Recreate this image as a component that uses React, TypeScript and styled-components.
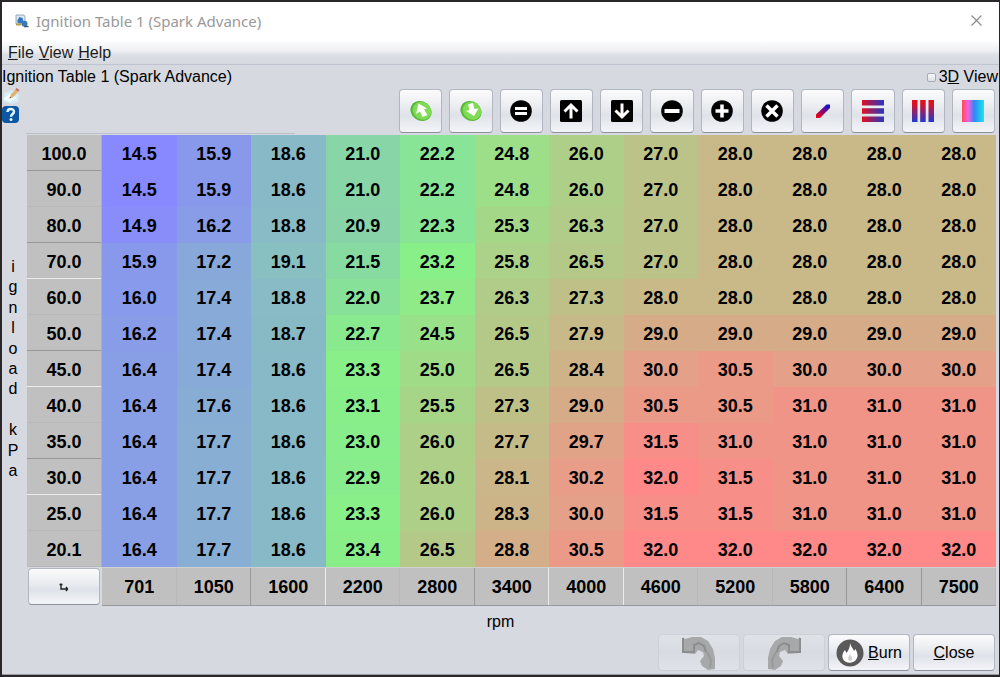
import React from "react";
import styled, { createGlobalStyle } from "styled-components";

const GlobalStyle = createGlobalStyle`
  * { box-sizing: border-box; }
  html, body, #root { height: 100%; }
  body { margin: 0; background: #2a272b; font-family: "Liberation Sans", Arial, sans-serif; color: #000; }
  button, input { font: inherit; color: inherit; }
`;

const LOADS = ["100.0", "90.0", "80.0", "70.0", "60.0", "50.0", "45.0", "40.0", "35.0", "30.0", "25.0", "20.1"];
const RPMS = [701, 1050, 1600, 2200, 2800, 3400, 4000, 4600, 5200, 5800, 6400, 7500];
const SPARK = [
  [14.5, 15.9, 18.6, 21.0, 22.2, 24.8, 26.0, 27.0, 28.0, 28.0, 28.0, 28.0],
  [14.5, 15.9, 18.6, 21.0, 22.2, 24.8, 26.0, 27.0, 28.0, 28.0, 28.0, 28.0],
  [14.9, 16.2, 18.8, 20.9, 22.3, 25.3, 26.3, 27.0, 28.0, 28.0, 28.0, 28.0],
  [15.9, 17.2, 19.1, 21.5, 23.2, 25.8, 26.5, 27.0, 28.0, 28.0, 28.0, 28.0],
  [16.0, 17.4, 18.8, 22.0, 23.7, 26.3, 27.3, 28.0, 28.0, 28.0, 28.0, 28.0],
  [16.2, 17.4, 18.7, 22.7, 24.5, 26.5, 27.9, 29.0, 29.0, 29.0, 29.0, 29.0],
  [16.4, 17.4, 18.6, 23.3, 25.0, 26.5, 28.4, 30.0, 30.5, 30.0, 30.0, 30.0],
  [16.4, 17.6, 18.6, 23.1, 25.5, 27.3, 29.0, 30.5, 30.5, 31.0, 31.0, 31.0],
  [16.4, 17.7, 18.6, 23.0, 26.0, 27.7, 29.7, 31.5, 31.0, 31.0, 31.0, 31.0],
  [16.4, 17.7, 18.6, 22.9, 26.0, 28.1, 30.2, 32.0, 31.5, 31.0, 31.0, 31.0],
  [16.4, 17.7, 18.6, 23.3, 26.0, 28.3, 30.0, 31.5, 31.5, 31.0, 31.0, 31.0],
  [16.4, 17.7, 18.6, 23.4, 26.5, 28.8, 30.5, 32.0, 32.0, 32.0, 32.0, 32.0],
];

/* Blue at the lowest advance, green in the middle, red at the highest. */
function heat(value: number) {
  const min = 14.5;
  const mid = 23.25;
  const max = 32;
  const low = 136;
  if (value <= mid) {
    const t = (value - min) / (mid - min);
    return `rgb(${low}, ${Math.round(low + t * 104)}, ${Math.round(255 - t * 119)})`;
  }
  const t = (value - mid) / (max - mid);
  return `rgb(${Math.round(low + t * 119)}, ${Math.round(240 - t * 104)}, ${low})`;
}

const Window = styled.div`
  min-height: 100%;
  padding: 2px 1px 2px 2px;
  display: flex;
  flex-direction: column;
`;
const Frame = styled.main`
  flex: 1;
  display: flex;
  flex-direction: column;
  background: #d6d9e0;
  border-bottom: 1px solid #9a9ca2;
`;
const TitleBar = styled.header`
  height: 39px;
  padding: 0 16px 2px 13px;
  display: flex;
  align-items: center;
  gap: 7px;
  background: #fff;
  color: #999;
  font-family: "Noto Sans", sans-serif;
  font-size: 15px;
`;
const TitleText = styled.span`
  flex: 1;
`;
const TitleClose = styled.button`
  padding: 0;
  border: 0;
  background: none;
  display: flex;
`;
const MenuBar = styled.nav`
  height: 24px;
  padding: 0 6px;
  display: flex;
  align-items: center;
  gap: 5px;
  font-size: 16px;
  background: linear-gradient(#fdfdfe, #eceef1 45%, #dcdfe4 60%, #d6d9e0);
  border-bottom: 1px solid #c0c4d0;
`;
const MenuItem = styled.button`
  padding: 0;
  border: 0;
  background: none;
  color: #1c1c1c;
`;
const Caption = styled.div`
  height: 22px;
  padding: 2px 1px 0 0;
  display: flex;
  justify-content: space-between;
  align-items: center;
  font-size: 16px;
`;
const Heading = styled.h1`
  margin: 0;
  font-size: 16px;
  font-weight: 400;
`;
const ViewToggle = styled.label`
  display: flex;
  align-items: center;
  gap: 3px;
`;
const TickBox = styled.input`
  appearance: none;
  width: 9px;
  height: 9px;
  margin: 0;
  border: 1px solid #a5aab5;
  border-radius: 2px;
  background: linear-gradient(#f8f8fa, #dcdfe6);
`;
const Tools = styled.div`
  height: 46px;
  padding-right: 4px;
  display: flex;
  justify-content: space-between;
`;
const Rule = styled.hr`
  width: 27%;
  height: 1px;
  margin: 0 0 1px 24px;
  border: 0;
  background: #bcbfc7;
`;
const SideIcons = styled.div`
  display: flex;
  flex-direction: column;
  gap: 2px;
`;
const SideButton = styled.button`
  padding: 0;
  border: 0;
  background: none;
  display: flex;
`;
const Toolbar = styled.div`
  flex: 0 1 596px;
  height: 44px;
  margin-top: 2px;
  display: grid;
  grid-template-columns: repeat(12, 1fr);
  gap: 7px;
`;
const Button = styled.button`
  padding: 0;
  display: flex;
  align-items: center;
  justify-content: center;
  gap: 4px;
  border: 1px solid #b2b6c0;
  border-bottom-color: #8c919c;
  border-radius: 4px;
  background: linear-gradient(#fbfbfc, #eaecf0 40%, #dfe2e8 60%, #f3f5f9);
  &:disabled { border-color: #cdd0d7; background: linear-gradient(#dfe2e7, #d8dbe1 50%, #dfe2e8); }
`;
const Body = styled.section`
  display: flex;
  padding-right: 3px;
`;
const LoadAxis = styled.div`
  flex: 0 0 25px;
  padding: 122px 3px 125px 0;
  display: flex;
  flex-direction: column;
  align-items: center;
  justify-content: space-between;
  font-size: 16px;
  line-height: 20px;
`;
const Letter = styled.span`
  height: 20px;
`;
const Grid = styled.table`
  flex: 1;
  width: 100%;
  table-layout: fixed;
  border-collapse: separate;
  border-spacing: 0;
  font-size: 18px;
  font-weight: 700;
  text-align: center;
  td, th { padding: 2px 0 0; height: 36px; }
`;
const LoadColumn = styled.col`
  width: 75px;
`;
const Cell = styled.td<{ $tone: string }>`
  background: ${(p) => p.$tone};
`;
type Edge = "dark" | "light" | "faint";
const EDGE_TONES: Record<Edge, string> = { dark: "#989898", light: "#ececec", faint: "#b8b8b8" };
const LoadHead = styled.th<{ $edge: Edge }>`
  background: #c0c0c0;
  border-right: 1px solid #b0b0b0;
  box-shadow: inset 0 -1px ${(p) => EDGE_TONES[p.$edge]};
`;
const RpmHead = styled.th<{ $edge: Edge }>`
  && { height: 39px; }
  background: #c0c0c0;
  border-top: 1px solid #d0d0d0;
  border-bottom: 1px solid #999;
  box-shadow: inset -1px 0 ${(p) => EDGE_TONES[p.$edge]};
`;
const Corner = styled.td`
  && { height: 39px; padding: 1px 2px 1px 1px; }
  ${Button} { width: 100%; height: 37px; }
`;
const RpmAxis = styled.div`
  height: 28px;
  line-height: 32px;
  font-size: 16px;
  text-align: center;
`;
const Actions = styled.footer`
  padding: 0 4px 2px;
  display: flex;
  justify-content: flex-end;
  gap: 3px;
  font-size: 16px;
  ${Button} { width: 82px; height: 37px; }
`;

const Icon = ({ children }: { children: React.ReactNode }) => (
  <svg width="22" height="22" viewBox="0 0 22 22" aria-hidden="true">{children}</svg>
);
const line = { fill: "none", stroke: "#fff", strokeWidth: 3 };

const GreenArrow = ({ down }: { down?: boolean }) => (
  <Icon>
    <ellipse cx="11" cy="11" rx="11" ry="9.6" transform="rotate(35 11 11)" fill="#56b936" />
    <ellipse cx="11.7" cy="10.3" rx="9.6" ry="8.6" transform="rotate(35 11 11)" fill="#80dc56" />
    <path
      d={down ? "M8 4.5l5-1.500 1.500 6 4-.5-4.500 7.500-8-5 3.500-1z" : "M8.500 3.500l8.500 5-3 1 3.500 5.500-5 2-2.500-5.500-4 2.500z"}
      fill="#fff"
    />
  </Icon>
);

const TOOLS: { name: string; icon: React.ReactNode }[] = [
  { name: "Increase", icon: <GreenArrow /> },
  { name: "Decrease", icon: <GreenArrow down /> },
  { name: "Set equal", icon: <Icon><circle cx="11" cy="11" r="10.8" /><path d="M5 8.500h12M5 13.500h12" {...line} /></Icon> },
  { name: "Step up", icon: <Icon><rect width="22" height="22" rx="1.5" /><path d="M11 18.500V6M4.500 11.500L11 5l6.500 6.500" {...line} /></Icon> },
  { name: "Step down", icon: <Icon><rect width="22" height="22" rx="1.5" /><path d="M11 3.500V16M4.500 10.500L11 17l6.500-6.500" {...line} /></Icon> },
  { name: "Subtract", icon: <Icon><circle cx="11" cy="11" r="10.8" /><path d="M3.500 11h15" {...line} strokeWidth={4} /></Icon> },
  { name: "Add", icon: <Icon><circle cx="11" cy="11" r="10.8" /><path d="M4.500 11h13M11 4.500v13" {...line} strokeWidth={3.5} /></Icon> },
  { name: "Multiply", icon: <Icon><circle cx="11" cy="11" r="10.8" /><path d="M5.500 5.500l11 11M16.500 5.500l-11 11" {...line} strokeWidth={3.5} /></Icon> },
  {
    name: "Interpolate",
    icon: (
      <Icon>
        <defs><linearGradient id="diag" x1="0" y1="1" x2="1" y2="0"><stop offset="0.1" stopColor="#f00018" /><stop offset="0.9" stopColor="#1010d8" /></linearGradient></defs>
        <path d="M4 14.500L14.500 4.500H18v3.500L8 18H4z" fill="url(#diag)" />
      </Icon>
    ),
  },
  {
    name: "Interpolate rows",
    icon: (
      <Icon>
        <defs><linearGradient id="rows"><stop stopColor="#e01020" /><stop offset="1" stopColor="#2238c8" /></linearGradient></defs>
        <path d="M0 0h22v5.500H0zM0 8.200h22v5.500H0zM0 16.500h22V22H0z" fill="url(#rows)" />
      </Icon>
    ),
  },
  {
    name: "Interpolate columns",
    icon: (
      <Icon>
        <defs><linearGradient id="cols" x2="0" y2="1"><stop offset="0.15" stopColor="#e01020" /><stop offset="1" stopColor="#2238d0" /></linearGradient></defs>
        <path d="M0 0h5.500v22H0zM8.200 0h5.500v22H8.200zM16.500 0H22v22h-5.500z" fill="url(#cols)" />
      </Icon>
    ),
  },
  {
    name: "Smooth",
    icon: (
      <Icon>
        <defs>
          <linearGradient id="smooth">
            <stop stopColor="#ff4a5a" /><stop offset="0.28" stopColor="#f860e0" /><stop offset="0.55" stopColor="#2f86f8" /><stop offset="1" stopColor="#18e8e8" />
          </linearGradient>
        </defs>
        <rect width="22" height="22" fill="url(#smooth)" />
      </Icon>
    ),
  },
];

const CurvedArrow = ({ flip }: { flip?: boolean }) => (
  <svg width="34" height="34" viewBox="0 0 34 34" aria-hidden="true">
    <g transform={flip ? "translate(34 0) scale(-1 1)" : undefined}>
      <path d="M1 1l2 2 7-2h9l7 4 5 8 2 9v11l-7 1-6-4-2-5 4-5-1-4-5-2-3 4-11-1-1-2z" fill="#a6a8aa" />
      <path d="M1 2v14h11V9l5-2 5 3 2 6" fill="none" stroke="#8b8d8f" strokeWidth="2" />
      <path d="M25 16l4 8-1 8" fill="none" stroke="#979a9c" strokeWidth="2" />
    </g>
  </svg>
);

const LOAD_EDGES: Edge[] = ["dark", "faint", "dark", "light", "faint", "dark", "light", "faint", "dark", "light", "faint", "faint"];
const RPM_EDGES: Edge[] = ["faint", "dark", "light", "faint", "dark", "light", "light", "faint", "faint", "dark", "dark", "faint"];

export default function App() {
  return (
    <Window>
      <GlobalStyle />
      <Frame>
        <TitleBar>
          <svg width="14" height="14" viewBox="0 0 14 14" aria-hidden="true">
            <path d="M1 1h8l1 2v7H1z" fill="#dce6ef" stroke="#8798a8" strokeWidth="0.8" />
            <path d="M2.500 6l2-3 3 1 1 4-3 1.500-3-1z" fill="#2f76c4" />
            <path d="M1 9.500h5v2H1z" fill="#b99a51" />
            <circle cx="9.5" cy="9.8" r="3" fill="#3c78b8" />
            <path d="M9 12.500h4.500" stroke="#385878" strokeWidth="1.5" />
          </svg>
          <TitleText>Ignition Table 1 (Spark Advance)</TitleText>
          <TitleClose aria-label="Close window">
            <svg width="13" height="13" viewBox="0 0 13 13" aria-hidden="true"><path d="M1.500 1.500l10 10M11.500 1.500l-10 10" stroke="#8c8c8c" strokeWidth="1.2" /></svg>
          </TitleClose>
        </TitleBar>
        <MenuBar>
          <MenuItem><u>F</u>ile</MenuItem>
          <MenuItem><u>V</u>iew</MenuItem>
          <MenuItem><u>H</u>elp</MenuItem>
        </MenuBar>
        <Caption>
          <Heading>Ignition Table 1 (Spark Advance)</Heading>
          <ViewToggle>
            <TickBox type="checkbox" />
            <span>3<u>D</u> View</span>
          </ViewToggle>
        </Caption>
        <Tools>
          <SideIcons>
            <SideButton aria-label="Edit notes">
              <svg width="18" height="17" viewBox="0 0 18 17" aria-hidden="true">
                <path d="M2 6l8-3 7 5-1 7-6 2-8-2z" fill="#d4edf5" />
                <path d="M1 12l6-5 8 4-7 4z" fill="#f4fbfd" />
                <path d="M7.500 11.500l1.500-4 5.500-6 2.500 2-5.500 6.500z" fill="#e2b36d" />
                <path d="M13.500 2.500l1-1.500 3 2-1.300 1.500z" fill="#c86a5c" />
                <path d="M7.500 11.500l.6-1.700 1.200 1z" fill="#444" />
              </svg>
            </SideButton>
            <SideButton aria-label="Help">
              <svg width="17" height="17" viewBox="0 0 17 17" aria-hidden="true">
                <rect width="17" height="17" rx="4" fill="#0c57a4" />
                <path d="M5.500 6c0-4 6.500-4 6.500-.3 0 2.300-3 2.300-3 5" fill="none" stroke="#e4f7ff" strokeWidth="2.4" />
                <circle cx="9" cy="13.5" r="1.5" fill="#e4f7ff" />
              </svg>
            </SideButton>
          </SideIcons>
          <Toolbar>
            {TOOLS.map((t) => (
              <Button key={t.name} aria-label={t.name}>{t.icon}</Button>
            ))}
          </Toolbar>
        </Tools>
        <Rule />
        <Body>
          <LoadAxis>
            {"ignload kPa".split("").map((c, i) => <Letter key={i}>{c}</Letter>)}
          </LoadAxis>
          <Grid>
            <colgroup>
              <LoadColumn />
              <col span={12} />
            </colgroup>
            <tbody>
              {SPARK.map((row, r) => (
                <tr key={LOADS[r]}>
                  <LoadHead scope="row" $edge={LOAD_EDGES[r]}>{LOADS[r]}</LoadHead>
                  {row.map((v, c) => <Cell key={c} $tone={heat(v)}>{v.toFixed(1)}</Cell>)}
                </tr>
              ))}
              <tr>
                <Corner>
                  <Button aria-label="Swap axes">
                    <svg width="10" height="10" viewBox="0 0 10 10" aria-hidden="true">
                      <path d="M2 1.500V7h6.500M.5 2.500h3M7 5l1.500 2L7 9" fill="none" stroke="#222" strokeWidth="1.4" />
                    </svg>
                  </Button>
                </Corner>
                {RPMS.map((v, c) => <RpmHead key={v} scope="col" $edge={RPM_EDGES[c]}>{v}</RpmHead>)}
              </tr>
            </tbody>
          </Grid>
        </Body>
        <RpmAxis>rpm</RpmAxis>
        <Actions>
          <Button disabled aria-label="Undo"><CurvedArrow /></Button>
          <Button disabled aria-label="Redo"><CurvedArrow flip /></Button>
          <Button>
            <svg width="28" height="28" viewBox="0 0 28 28" aria-hidden="true">
              <circle cx="14" cy="14" r="13.5" fill="#595959" />
              <path d="M14 4c1 4 3 5 4 8l1.500-2c2 4 3 7 1 10-3 5-11 5-13.500 0-1.500-4 0-6 2-9l1.500 3c2-3 3.500-5 3.500-10z" fill="#fff" />
              <path d="M14 15c2 3 3 4 1.500 6.500-1.500 1-3 0-3.500-1.500 0-2 1.500-3 2-5z" fill="#d0d0d0" />
            </svg>
            <span><u>B</u>urn</span>
          </Button>
          <Button><span><u>C</u>lose</span></Button>
        </Actions>
      </Frame>
    </Window>
  );
}
